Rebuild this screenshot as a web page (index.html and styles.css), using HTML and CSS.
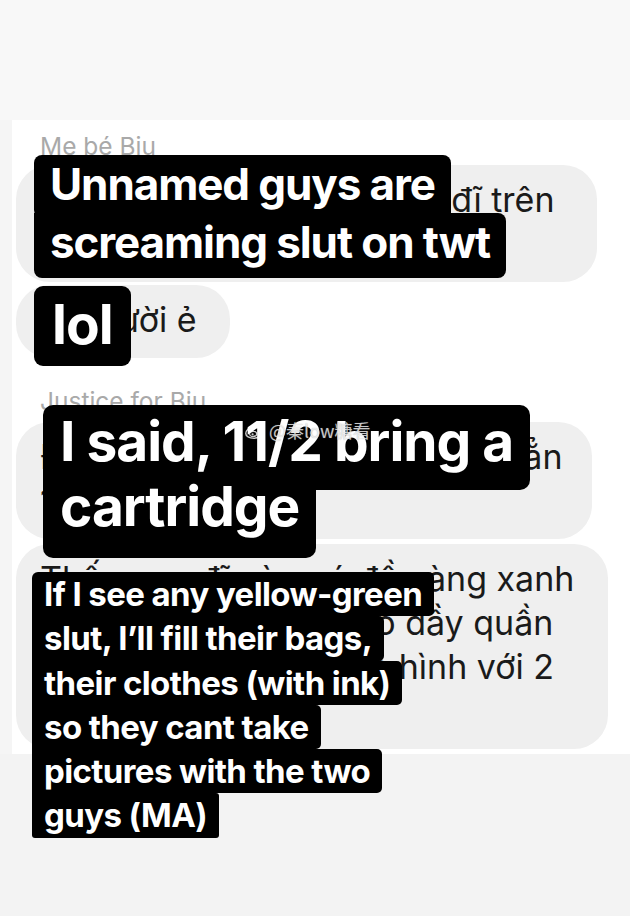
FILE: index.html
```html
<!DOCTYPE html>
<html lang="vi">
<head>
<meta charset="utf-8">
<title>Chat</title>
<link rel="stylesheet" href="styles.css">
</head>
<body>
<div class="page">
  <div class="topbar"></div>
  <div class="middle">
    <div class="edge"></div>
    <div class="panel">
      <div class="sender">Me bé Biu</div>
      <div class="bubble b1">
        <div class="ln">Hai thằng không tên chửi đĩ trên</div>
        <div class="ln">twt</div>
      </div>
      <div class="bubble b2"><div class="ln">Má cười ẻ</div></div>
      <div class="sender s2">Justice for Biu</div>
      <div class="bubble b3">
        <div class="ln">Đã nói rồi đó 11/2 mang theo hẳn</div>
        <div class="ln">1 hộp mực</div>
      </div>
      <div class="bubble b4">
        <div class="ln">Thấy con đĩ nào có đồ vàng xanh</div>
        <div class="ln">đổ mực, vào túi, vào o dầy quần</div>
        <div class="ln">áo, để tụi nó hết chụp hình với 2</div>
        <div class="ln">anh (MA)</div>
      </div>
    </div>
  </div>
  <div class="bottom"></div>

  <div class="cap cap1">
    <div class="row r1">Unnamed guys are</div>
    <div class="row r2">screaming slut on twt</div>
  </div>
  <div class="cap cap2">
    <div class="row">lol</div>
  </div>
  <div class="cap cap3">
    <div class="row r1">I said, 11/2 bring a</div>
    <div class="row r2">cartridge</div>
  </div>
  <div class="cap cap4">
    <div class="row first">If I see any yellow-green</div>
    <div class="row">slut, I’ll fill their bags,</div>
    <div class="row">their clothes (with ink)</div>
    <div class="row">so they cant take</div>
    <div class="row">pictures with the two</div>
    <div class="row last">guys (MA)</div>
  </div>

  <div class="watermark">
    <svg class="wb" width="22" height="19" viewBox="0 0 20 17">
      <path d="M8.2 4.2c-3.2 1-6.6 4.2-6.6 7 0 2.6 3.2 4.4 7.2 4.4 4.6 0 7.6-2.4 7.6-4.8 0-1.6-1.4-2.2-2.4-2.5 0.6-1.6 0.3-2.8-1.6-2.7-1 0-2.2 0.6-2.6 0.8 0.4-1.6 0.2-3.1-1.6-2.2z" fill="none" stroke="rgba(255,255,255,0.8)" stroke-width="1.3"/>
      <ellipse cx="8.3" cy="11.6" rx="3.2" ry="2.3" fill="none" stroke="rgba(255,255,255,0.8)" stroke-width="1.1"/>
      <circle cx="7.8" cy="11.9" r="1" fill="rgba(255,255,255,0.8)"/>
      <path d="M13.4 1.4c2.6 0 4.8 2 4.6 4.8M13.4 3.6c1.3 0 2.4 1 2.3 2.4" fill="none" stroke="rgba(255,255,255,0.8)" stroke-width="1.2" stroke-linecap="round"/>
    </svg>
    <span>@秦low糖看</span>
  </div>
</div>
</body>
</html>
```

FILE: styles.css
```css
* { box-sizing: border-box; }
html, body { margin: 0; padding: 0; }
body { background: #f3f3f3; }

.page {
  position: relative;
  width: 630px;
  height: 916px;
  overflow: hidden;
  background: #f3f3f3;
  font-family: Inter, "Liberation Sans", sans-serif;
}

.topbar { height: 120px; background: #f8f8f8; }

.middle { display: flex; height: 634px; }
.edge { width: 12px; background: #f5f5f5; }
.panel {
  flex: 1;
  background: #ffffff;
  padding: 12px 0 5px 4px;
  display: flex;
  flex-direction: column;
  align-items: flex-start;
}

.sender {
  font-size: 24.5px;
  line-height: 28px;
  color: #a9a9a9;
  padding-left: 24px;
  margin-bottom: 5px;
}
.sender.s2 { margin-top: 29px; margin-bottom: 7px; }

.bubble {
  background: #efefef;
  border-radius: 34px;
  padding: 13px 24px 16px 24px;
  font-size: 34px;
  line-height: 44px;
  color: #1a1a1a;
  white-space: nowrap;
  overflow: hidden;
}
.b1 { width: 581px; }
.b2 { width: 214px; margin-top: 3px; }
.b3 { width: 576px; }
.b4 { width: 592px; margin-top: 5px; }

.bottom { height: 162px; background: #f3f3f3; }

/* Story-style caption overlays */
.cap {
  position: absolute;
  font-family: Inter, Roboto, "Liberation Sans", sans-serif;
  font-weight: 700;
  color: #ffffff;
  white-space: nowrap;
}
.cap .row {
  background: #000;
  width: fit-content;
  position: relative;
}

.cap1 { left: 34px; top: 155px; font-size: 44px; line-height: 58px; letter-spacing: -1.1px; }
.cap1 .row { padding: 0 16px; }
.cap1 .r1 { padding-bottom: 5px; border-radius: 8px 8px 0 8px; }
.cap1 .r2 { margin-top: -5px; padding-bottom: 7px; border-radius: 0 8px 8px 8px; }

.cap2 { left: 34px; top: 286px; font-size: 55px; line-height: 76px; letter-spacing: -1px; }
.cap2 .row { padding: 0 18px 4px 18px; border-radius: 9px; }

.cap3 { left: 43px; top: 405px; font-size: 55px; line-height: 65px; letter-spacing: -1px; }
.cap3 .row { padding-left: 17px; padding-right: 17px; }
.cap3 .r1 { padding-top: 4px; padding-bottom: 16px; border-radius: 10px; }
.cap3 .r2 { margin-top: -16px; padding-bottom: 19px; border-radius: 0 10px 10px 10px; }

.cap4 { left: 32px; top: 572px; font-size: 33px; line-height: 44.3px; letter-spacing: -0.6px; }
.cap4 .row { padding: 0 12px; border-radius: 0 5px 5px 0; }
.cap4 .first { border-radius: 6px 5px 5px 0; }
.cap4 .last { border-radius: 0 3px 3px 3px; }

.watermark {
  position: absolute;
  left: 244px;
  top: 420px;
  display: flex;
  align-items: center;
  gap: 3px;
  font-family: "Noto Sans CJK SC", "Noto Sans", sans-serif;
  font-size: 18px;
  line-height: 20px;
  color: rgba(255, 255, 255, 0.72);
  text-shadow: 0 0 1px rgba(120, 120, 120, 0.6);
}
.wb { display: block; }
```
